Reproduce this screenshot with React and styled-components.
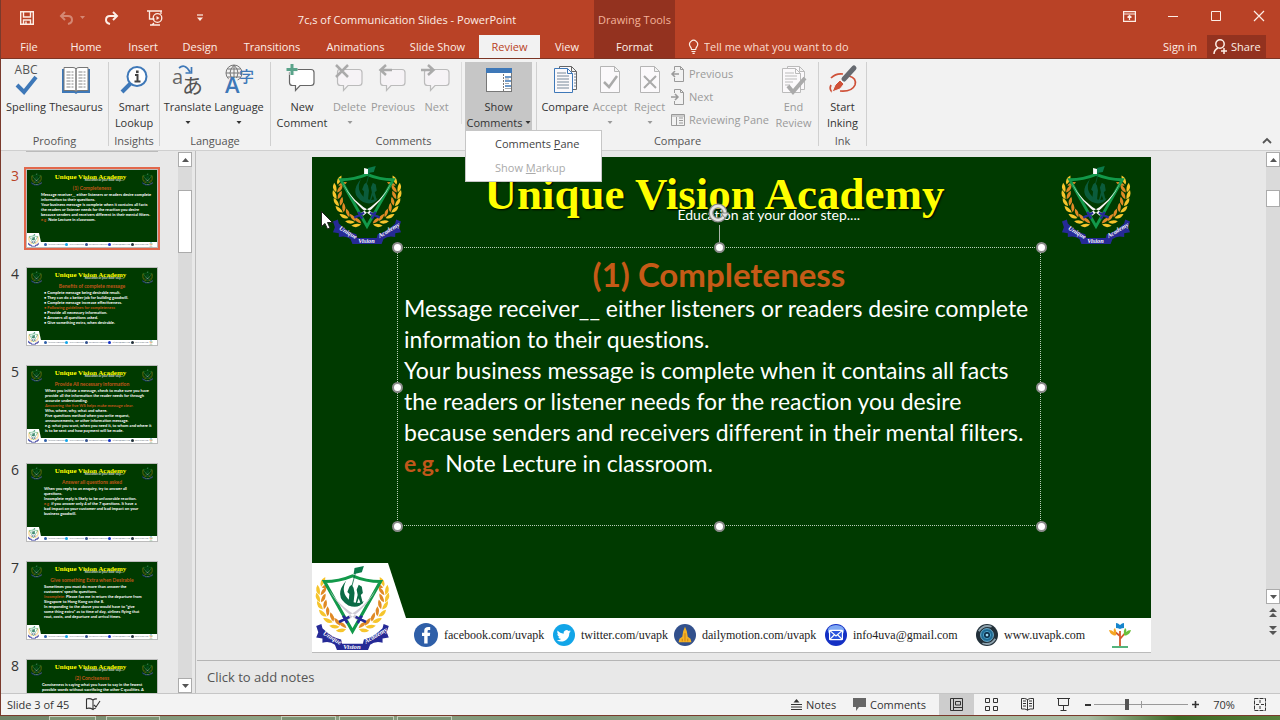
import React from "react";
import styled, { createGlobalStyle, css } from "styled-components";

const ui = `"Open Sans", "Noto Sans", sans-serif`;
const slideFont = `Lato, "Open Sans", sans-serif`;
const serif = `"Liberation Serif", serif`;
const red = "#b94226";
const darkRed = "#93321f";
const green = "#003a00";

const Global = createGlobalStyle`
  * { box-sizing: border-box; }
  body { margin: 0; font-family: ${ui}; font-size: 11px; color: #333; background: #e8e8e8; overflow: hidden; }
  button, input, textarea { font: inherit; color: inherit; margin: 0; padding: 0; border: 0; background: none; }
  svg { display: block; flex: none; overflow: visible; }
`;

/* ---------- window frame ---------- */
const Window = styled.div`
  height: 100vh;
  min-height: 600px;
  display: flex;
  flex-direction: column;
  background: #e8e8e8;
`;
const Frame = styled.div`
  flex: 1;
  min-height: 0;
  display: flex;
  flex-direction: column;
  border-left: 1px solid #7a3a2c;
`;
const Header = styled.header`
  background: ${red};
  color: #fdeee6;
  border-bottom: 1px solid #7d3524;
  height: 59px;
`;
const TitleBar = styled.div`
  height: 35px;
  display: flex;
`;
const QuickAccess = styled.div`
  width: 219px;
  display: flex;
  align-items: center;
`;
const QuickButton = styled.button`
  width: ${(p) => p.$w}px;
  height: 34px;
  display: flex;
  align-items: center;
  justify-content: center;
  opacity: ${(p) => (p.disabled ? 0.4 : 1)};
`;
const WindowTitle = styled.div`
  width: 374px;
  line-height: 39px;
  text-align: center;
`;
const ToolsTitle = styled.div`
  width: 81px;
  line-height: 39px;
  text-align: center;
  background: ${darkRed};
  color: #f3b29a;
`;
const WindowButtons = styled.div`
  margin-left: auto;
  display: flex;
`;
const WindowButton = styled.button`
  width: 43px;
  height: 32px;
  display: flex;
  align-items: center;
  justify-content: center;
`;
const Tabs = styled.nav`
  display: flex;
  height: 23px;
`;
const Tab = styled.button`
  width: ${(p) => p.$w}px;
  line-height: 23px;
  text-align: center;
  white-space: nowrap;
  ${(p) => p.$kind === "active" && css`background: #f2f2f2; color: ${red};`}
  ${(p) => p.$kind === "tool" && css`background: ${darkRed};`}
`;
const TellMe = styled.label`
  display: flex;
  align-items: center;
  gap: 5px;
  padding-left: 13px;
  flex: 1;
  input { flex: 1; min-width: 0; outline: 0; }
  input::placeholder { color: #f9dccf; opacity: 1; }
`;
const ShareButton = styled.button`
  display: flex;
  align-items: center;
  gap: 4px;
  width: 59px;
  margin: 0 14px 0 10px;
  padding-left: 6px;
  background: ${darkRed};
`;

/* ---------- ribbon ---------- */
const Ribbon = styled.div`
  height: 92px;
  padding: 3px 0 4px;
  display: flex;
  background: #f2f2f2;
  border-bottom: 1px solid #cfcfcf;
`;
const Group = styled.section`
  display: flex;
  flex-direction: column;
  border-right: 1px solid #d0d0d0;
`;
const GroupTools = styled.div`
  flex: 1;
  display: flex;
  padding: 0 ${(p) => p.$r || 0}px 0 ${(p) => p.$l || 0}px;
`;
const GroupLabel = styled.div`
  line-height: 10px;
  height: 10px;
  text-align: center;
  color: #555;
`;
const BigButton = styled.button`
  width: ${(p) => p.$w}px;
  height: 68px;
  padding-top: 2px;
  display: flex;
  flex-direction: column;
  align-items: center;
  line-height: 16px;
  white-space: nowrap;
  color: ${(p) => (p.disabled ? "#9a9a9a" : "#333")};
  background: ${(p) => (p.$open ? "#c6c6c6" : "none")};
  svg.icon { margin-bottom: 3px; }
`;
const SecondLine = styled.span`
  height: 16px;
  display: flex;
  align-items: center;
  gap: 2px;
`;
const ShortRule = styled.div`
  width: 1px;
  height: 62px;
  margin: 0 3px;
  background: #dcdcdc;
`;
const SmallTools = styled.div`
  width: 103px;
  padding-left: 3px;
`;
const SmallButton = styled.button`
  display: flex;
  align-items: center;
  gap: 4px;
  height: 23px;
  color: #9a9a9a;
  white-space: nowrap;
`;
const CollapseButton = styled.button`
  margin: auto 7px 0 auto;
  padding: 2px;
`;
const MenuAnchor = styled.div`
  position: relative;
`;
const Menu = styled.div`
  position: absolute;
  z-index: 5;
  top: 68px;
  left: 0;
  width: 137px;
  padding: 1px 0;
  background: #fff;
  border: 1px solid #c6c6c6;
`;
const MenuItem = styled.button`
  display: block;
  width: 100%;
  padding-left: 29px;
  line-height: 24px;
  text-align: left;
  color: ${(p) => (p.disabled ? "#aaa" : "#444")};
`;

/* ---------- workspace ---------- */
const Workspace = styled.main`
  flex: 1;
  min-height: 0;
  display: flex;
`;
const SlideList = styled.aside`
  width: 195px;
  display: flex;
  justify-content: space-between;
  padding-right: 3px;
  border-right: 1px solid #bdbdbd;
`;
const ThumbColumn = styled.div`
  overflow: hidden;
  display: flex;
  flex-direction: column;
  gap: 19px;
  padding-left: 2px;
`;
const PreviousEdge = styled.div`
  flex: none;
  width: 132px;
  height: 1px;
  margin: 0 0 -2px 23px;
  background: #bbb;
`;
const ThumbRow = styled.div`
  display: flex;
  flex: none;
  height: 79px;
  color: ${(p) => (p.$selected ? red : "#333")};
`;
const ThumbNumber = styled.span`
  width: 23px;
  padding-left: 8px;
  font-size: 14px;
  line-height: 14px;
`;
const Thumb = styled.div`
  position: relative;
  width: 132px;
  margin-right: 4px;
  display: flex;
  flex-direction: column;
  background: ${green};
  border: 1px solid #bbb;
  box-shadow: ${(p) => (p.$selected ? "0 0 0 2px #e2684c" : "none")};
  color: #fff;
`;
const ThumbTop = styled.div`
  display: flex;
  justify-content: space-between;
  align-items: flex-start;
  height: 15px;
  padding: 3px 4px 0;
  svg { opacity: 0.65; }
`;
const ThumbTitle = styled.div`
  padding-right: 3px;
  font: 700 7px/8px ${serif};
  color: #ff0;
`;
const ThumbSubtitle = styled.div`
  margin: -3px 0 0 30px;
  font: 3px/4px ${slideFont};
  color: #fff;
`;
const ThumbBody = styled.div`
  flex: 1;
  min-height: 0;
  padding-left: ${(p) => p.$l}px;
  font: 700 4px/5px ${slideFont};
  white-space: nowrap;
`;
const ThumbHeading = styled.div`
  margin: 0 0 1px -${(p) => p.$l}px;
  text-align: center;
  font-size: 5px;
  line-height: 6px;
  color: #c2571a;
`;
const Orange = styled.span`
  color: #c2571a;
`;
const ThumbFoot = styled.div`
  height: 5px;
  padding: 0 4px 0 17px;
  display: flex;
  align-items: center;
  justify-content: space-between;
  background: #fff;
  color: #456;
  font: 2px/5px ${serif};
`;
const ThumbContact = styled.span`
  display: flex;
  align-items: center;
  gap: 1px;
  i { width: 3px; height: 3px; border-radius: 50%; background: ${(p) => p.$c}; }
`;
const ThumbBadge = styled.div`
  position: absolute;
  left: 0;
  bottom: 0;
  padding: 1px 3px 0 1px;
  background: #fff;
  clip-path: polygon(0 0, 80% 0, 100% 100%, 0 100%);
`;

const Scroll = styled.div`
  width: ${(p) => p.$w}px;
  display: flex;
  flex-direction: column;
  padding: 1px 0 ${(p) => p.$b || 0}px;
`;
const ScrollButton = styled.button`
  height: ${(p) => (p.$flat ? 17 : 15)}px;
  display: flex;
  align-items: center;
  justify-content: center;
  background: ${(p) => (p.$flat ? "none" : "#fff")};
  border: ${(p) => (p.$flat ? 0 : 1)}px solid #ababab;
`;
const ScrollTrack = styled.div`
  flex: 1;
  padding-top: 23px;
  background: #dadada;
`;
const ScrollThumb = styled.div`
  height: ${(p) => p.$h}px;
  background: #fff;
  border: 1px solid #ababab;
`;

const Editor = styled.div`
  flex: 1;
  min-width: 0;
  display: flex;
  flex-direction: column;
`;
const Stage = styled.div`
  flex: 1;
  min-height: 0;
  display: flex;
`;
const StagePad = styled.div`
  flex: 1;
  min-width: 0;
  padding: 6px 115px 0 116px;
`;
const Notes = styled.textarea`
  display: block;
  height: 33px;
  margin-left: 1px;
  padding: 6px 10px;
  border-top: 1px solid #b5b5b5;
  resize: none;
  outline: 0;
  font-size: 13px;
  line-height: 20px;
  &::placeholder { color: #555; opacity: 1; }
`;

/* ---------- slide ---------- */
const Slide = styled.article`
  position: relative;
  aspect-ratio: 839 / 496;
  display: flex;
  flex-direction: column;
  background: ${green};
  color: #fff;
  font-family: ${slideFont};
  font-variant-ligatures: none;
  border-bottom: 1px solid #bbb;
`;
const SlideTop = styled.div`
  flex: 1;
  display: flex;
  justify-content: space-between;
  align-items: flex-start;
  padding: 8px 20px 0;
`;
const SlideHeading = styled.div`
  padding-right: 34px;
`;
const SlideTitle = styled.h1`
  margin: 0;
  padding-top: 4px;
  font: 700 45px/50px ${serif};
  color: #ff0;
  text-shadow: 1px 1px 2px #000;
`;
const SlideSubtitle = styled.p`
  margin: -12px 0 0;
  padding-left: 193px;
  font-size: 14px;
  line-height: 16px;
`;
const TextBox = styled.div`
  position: absolute;
  left: 85px;
  right: 110px;
  top: 90px;
  height: 279px;
  padding: 8px 7px;
  outline: 1px dotted #b9cdb9;
  outline-offset: -1px;
  font-size: 23px;
  line-height: 31px;
  white-space: nowrap;
`;
const BoxHeading = styled.h2`
  margin: 0;
  text-align: center;
  font-size: 33px;
  line-height: 38px;
  color: #c55a17;
`;
const Handle = styled.i`
  position: absolute;
  left: ${(p) => p.$x}%;
  top: ${(p) => p.$y}%;
  width: 11px;
  height: 11px;
  margin: -5px;
  border-radius: 50%;
  background: #fff;
  border: 2px solid #8b8b8b;
`;
const RotateHandle = styled.div`
  position: absolute;
  left: 50%;
  bottom: 100%;
  margin-left: -11px;
  width: 22px;
  display: flex;
  flex-direction: column;
  align-items: center;
`;
const Stem = styled.i`
  width: 1px;
  height: 22px;
  background: #a9b5a9;
`;
const SlideFoot = styled.footer`
  height: 34px;
  padding-left: 102px;
  display: flex;
  align-items: center;
  background: #fff;
  color: #222;
  font: 12px/16px ${serif};
`;
const Contact = styled.span`
  width: ${(p) => p.$w}px;
  display: flex;
  align-items: center;
  gap: 6px;
`;
const BadgeCorner = styled.div`
  position: absolute;
  left: 0;
  bottom: 0;
  width: 94px;
  height: 89px;
  padding: 3px 0 0 3px;
  background: #fff;
  clip-path: polygon(0 0, 76px 0, 94px 55px, 94px 100%, 0 100%);
`;
const Pointer = styled.div`
  position: absolute;
  left: 9px;
  top: 54px;
`;

/* ---------- status bar ---------- */
const Status = styled.footer`
  height: 23px;
  display: flex;
  align-items: center;
  padding-right: 6px;
  background: #f3f3f3;
  border-top: 1px solid #c6c6c6;
  border-bottom: 1px solid #7a3a2c;
`;
const StatusButton = styled.button`
  height: 21px;
  width: ${(p) => p.$w}px;
  display: flex;
  align-items: center;
  justify-content: ${(p) => (p.$left ? "flex-start" : "center")};
  gap: 4px;
  background: ${(p) => (p.$on ? "#cdcdcd" : "none")};
`;
const SlideCount = styled.span`
  width: 84px;
  padding-left: 6px;
`;
const Spacer = styled.span`
  flex: 1;
`;
const ZoomRange = styled.input`
  appearance: none;
  width: 94px;
  height: 16px;
  background:
    linear-gradient(#999, #999) 50% 50% / 1px 7px no-repeat,
    linear-gradient(#999, #999) 50% 50% / 100% 1px no-repeat;
  &::-webkit-slider-thumb { appearance: none; width: 4px; height: 11px; background: #555; }
`;
const Desktop = styled.div`
  height: 4px;
  display: flex;
  background: linear-gradient(90deg, #6f8468, #8da284 20%, #7f9677 45%, #9db398 60%, #a9bba2 85%, #3d6a24 92%, #56803a);
`;
const DesktopTile = styled.i`
  width: ${(p) => p.$w}px;
  margin-left: ${(p) => p.$m}px;
  border: 1px solid #c4d0bd;
  border-bottom: 0;
  background: #7d9475;
`;

/* ---------- drawings ---------- */
const Svg = ({ w = 16, h, children, vb, className }) => (
  <svg className={className} width={w} height={h || w} viewBox={vb || `0 0 ${w} ${h || w}`} fill="none" stroke="currentColor" aria-hidden="true">
    {children}
  </svg>
);
const Caret = () => <Svg w={6} h={4}><path d="M.5 0h5L3 3z" fill="currentColor" stroke="none" /></Svg>;

const Bubble = ({ x = 0, c = "#666", fill = "#fff" }) => (
  <path d={`M${x + 3} 5.500h19q3 0 3 3v10q0 3-3 3H${x + 11}l-4.500 5v-5h-3q-3 0-3-3v-10q0-3 2.500-3z`} stroke={c} fill={fill} strokeWidth="1.200" />
);
const Page = ({ x = 0, y = 0, c, w = 19, h = 26 }) => (
  <path d={`M${x + 0.5} ${y + 0.5}h${w - 6}l5 5v${h - 6}h-${w - 1}zM${x + w - 5.500} ${y + 0.5}v5h5`} stroke={c} fill="#fbf9fb" />
);

const icons = {
  spelling: (
    <>
      <text x="16" y="10" textAnchor="middle" fontFamily="Open Sans" fontSize="12" fill="#555" stroke="none">ABC</text>
      <path d="M7 21l7 7L26 13" stroke="#3e78b8" strokeWidth="4" />
    </>
  ),
  thesaurus: (
    <>
      <path d="M2 5h28v24H17.500L16 30l-1.500-1H2z" fill="#3e78b8" stroke="none" />
      <path d="M4 3.500h9q3 0 3 2v22q0-1-3-1H4zM28 3.500h-9q-3 0-3 2v22q0-1 3-1h9z" fill="#fff" stroke="#777" />
      <path d="M6.500 8h7M6.500 11h7M6.500 14h7M6.500 17h7M6.500 20h7M6.500 23h7M18.500 8h7M18.500 11h7M18.500 14h7M18.500 17h7M18.500 20h7M18.500 23h7" stroke="#888" strokeDasharray="4 1" />
    </>
  ),
  lookup: (
    <>
      <path d="M13 19L4 28" stroke="#3e78b8" strokeWidth="4" />
      <circle cx="19" cy="12.500" r="9.500" stroke="#3e78b8" strokeWidth="2" fill="#fff" />
      <path d="M17 11h2.500v6M16.500 17.500h6" stroke="#444" strokeWidth="2" />
      <rect x="18" y="6.500" width="2.600" height="2.600" fill="#444" stroke="none" />
    </>
  ),
  translate: (
    <>
      <text x="0" y="20" fontFamily="Open Sans" fontSize="20" fill="#666" stroke="none">a</text>
      <text x="10" y="29" fontFamily="Noto Sans CJK JP" fontSize="21" fill="#555" stroke="none">あ</text>
      <path d="M7 4q6-5 11 4M19.500 3v6h-6" stroke="#3e78b8" strokeWidth="1.700" />
    </>
  ),
  language: (
    <>
      <circle cx="11" cy="9" r="8" stroke="#777" />
      <path d="M3 9h16M4.500 5h13M4.500 13h13M11 1v16M11 1q-8 8 0 16M11 1q8 8 0 16" stroke="#777" />
      <path d="M6 14h8l4 15H2z" fill="#f2f2f2" stroke="none" />
      <text x="2" y="29" fontFamily="Open Sans" fontWeight="600" fontSize="22" fill="#3e78b8" stroke="none">A</text>
      <text x="16" y="18" fontFamily="Noto Sans CJK JP" fontSize="15" fontWeight="500" fill="#3e78b8" stroke="none">字</text>
    </>
  ),
  newComment: (
    <>
      <Bubble x={3} />
      <path d="M6 0v11M.5 5.500h11" stroke="#f2f2f2" strokeWidth="5" />
      <path d="M6 0v11M.5 5.500h11" stroke="#5aa38a" strokeWidth="3" />
    </>
  ),
  deleteComment: (
    <>
      <Bubble x={3} c="#bbb" fill="#f6f3f6" />
      <path d="M2 1l12 12M14 1L2 13" stroke="#aaa" strokeWidth="2.500" />
    </>
  ),
  prevComment: (
    <>
      <Bubble x={3} c="#bbb" fill="#f6f3f6" />
      <path d="M3 6h12M9 1L3.500 6 9 11" stroke="#aaa" strokeWidth="2.500" />
    </>
  ),
  nextComment: (
    <>
      <Bubble x={3} c="#bbb" fill="#f6f3f6" />
      <path d="M0 6h12M7 1l5.500 5L7 11" stroke="#aaa" strokeWidth="2.500" />
    </>
  ),
  showComments: (
    <>
      <rect x="3.500" y="4.500" width="25" height="23" fill="#fff" stroke="#777" />
      <path d="M3 4h26v5H3z" fill="#3e78b8" stroke="none" />
      <path d="M20.500 10v17" stroke="#777" strokeDasharray="2 1" />
      <path d="M22 13h6M22 17h6M22 22h6" stroke="#3e78b8" strokeWidth="1.500" />
      <path d="M22 15h4M22 19.500h4M22 24.500h6" stroke="#aaa" />
    </>
  ),
  compare: (
    <>
      <Page x={10} y={2} c="#666" w={18} h={24} />
      <Page x={5} y={4} c="#3e78b8" w={19} h={25} />
      <path d="M8 9h9M8 12h12M8 15h12M8 18h12M8 21h12M8 24h12" stroke="#789" />
      <path d="M25 10h2M25 13h2M25 16h2M25 19h2M25 22h2" stroke="#789" />
    </>
  ),
  accept: (<><Page x={6} y={2} c="#b5b5b5" w={20} h={27} /><path d="M10 18l5 5 8-11" stroke="#aaa" strokeWidth="2.500" /></>),
  reject: (<><Page x={6} y={2} c="#b5b5b5" w={20} h={27} /><path d="M10 12l12 12M22 12L10 24" stroke="#aaa" strokeWidth="2" /></>),
  endReview: (
    <>
      <Page x={9} y={2} c="#bbb" w={18} h={24} />
      <Page x={4} y={4} c="#bbb" w={19} h={25} />
      <path d="M7 9h9M7 12h12M7 15h12M7 18h8M7 21h5" stroke="#bbb" />
      <path d="M10 22l5 6 12-14" stroke="#aaa" strokeWidth="4" />
    </>
  ),
  ink: (
    <>
      <path d="M4 14q5-5 12-4M22 12q8 2 6 9-3 7-15 6M4 21q-2 4 1 7" stroke="#cf5138" strokeWidth="1.700" />
      <path d="M17 15L27 4" stroke="#666a70" strokeWidth="5" strokeLinecap="round" />
      <path d="M5 28l3-7 5-5 4 4-4 5z" fill="#cf5138" stroke="#f2f2f2" strokeWidth="1" />
    </>
  ),
};
const RibbonIcon = ({ name }) => <Svg className="icon" w={32}>{icons[name]}</Svg>;

const Leaves = ({ flip }) => {
  const pts = [[7, 18, -50], [4, 25, -15], [4, 32, -5], [6, 39, 8], [9, 46, 22], [14, 52, 40], [20, 57, 58], [26, 60, 72]];
  return (
    <g transform={flip ? "translate(70 0) scale(-1 1)" : undefined} stroke="none">
      {pts.map(([x, y, a], i) => (
        <g key={i} transform={`translate(${x} ${y}) rotate(${-a})`}>
          <path d="M0 3Q-6 1-4.500-6 0-3 0 3z" fill="#f6c52c" />
          <path d="M1 3Q6 0 4.500-6 0-3 1 3z" fill="#e08a25" />
        </g>
      ))}
    </g>
  );
};
const Logo = ({ w, light }) => {
  const figure = light ? "#0b6b46" : "#0b5c3c";
  return (
    <svg width={w} height={Math.round((w * 82) / 72)} viewBox="-1 0 72 82" fill="none" aria-hidden="true">
      <Leaves />
      <Leaves flip />
      <path d="M8 15Q22 15 35 9.500 48 15 62 15L35 63z" stroke="#12994a" strokeWidth="3" fill={light ? "#fff" : "none"} />
      <path d="M29 14q-13 15 2 24 10 4 15-4-8 4-14-1-9-8-3-19z" fill={figure} />
      <path d="M31 36l1-9-2-2 2-5 2-2 2 3 1 5-1 10zM38 36l2-8-1-5 2-5 3 2 1 6-2 2 2 8-2 1-2-6-2 6z" fill={figure} />
      <path d="M34 21l4-15" stroke={figure} strokeWidth=".8" />
      <path d={light ? "M37 2l9-2-2 6-8 2z" : "M36 3l8-2-2 6-6 1z"} fill="#0b7a4a" />
      {!light && <path d="M32 3l4 1v5h-4z" fill="#fff" />}
      <path d="M10 18Q20 38 41 49l-2 3Q19 38 10 18zM60 18Q50 38 29 49l2 3Q51 38 60 18z" fill={light ? "#cfcbd4" : "#f4f4f4"} />
      <path d="M22 54l10-5M26 48l4 7M48 54l-10-5M44 48l-4 7" stroke="#262a96" strokeWidth="2.500" />
      <path d="M0 58l5-2 1 4q9 9 18 11l1 4h20l1-4q9-2 18-11l1-4 5 2-2 6 2 5-6 1v4q-7-2-12 2l-2 5H20l-2-5q-5-4-12-2v-4l-6-1 2-5z" fill="#262a96" />
      <g fill="#fff" fontFamily="Liberation Serif" fontWeight="700" fontStyle="italic" fontSize="6.500">
        <text transform="translate(6 66) rotate(31)">Unique</text>
        <text x="26" y="80">Vision</text>
        <text transform="translate(48 75) rotate(-31)">Academy</text>
      </g>
    </svg>
  );
};

const Facebook = () => (
  <svg width="24" height="24" viewBox="0 0 24 24"><circle cx="12" cy="12" r="12" fill="#2f5fa8" /><path d="M10.200 20.500V13H8V9.800h2.200V8c0-3 1.500-4 4-4h2v3h-1.300c-1 0-1.300.4-1.300 1.300v1.500h2.600l-.4 3.200h-2.200v7.500z" fill="#fff" /></svg>
);
const Twitter = () => (
  <svg width="22" height="22" viewBox="0 0 24 24"><circle cx="12" cy="12" r="12" fill="#12a5e8" /><path d="M19.500 8c-.6.300-1.200.4-1.800.5.700-.4 1.100-1 1.300-1.700-.6.400-1.300.6-2 .8a3.200 3.200 0 0 0-5.400 2.900c-2.600-.1-5-1.400-6.500-3.400-.8 1.500-.4 3.300 1 4.300-.5 0-1-.2-1.400-.4 0 1.500 1.100 2.800 2.500 3.100-.4.100-1 .1-1.400 0 .4 1.300 1.600 2.200 3 2.200A6.400 6.400 0 0 1 4 17.700c6 3.800 13.800 0 13.800-8 .7-.5 1.300-1 1.700-1.700z" fill="#fff" /></svg>
);
const Daily = () => (
  <svg width="22" height="22" viewBox="0 0 24 24"><circle cx="12" cy="12" r="12" fill="#32508c" /><path d="M12 3l2 5 1 6 3 2 1 4H5l1-4 3-2 1-6z" fill="#f5b324" /><path d="M12 10v9M9 16v3M15 16v3" stroke="#c87a15" /></svg>
);
const Mail = () => (
  <svg width="22" height="22" viewBox="0 0 24 24"><circle cx="12" cy="12" r="12" fill="#1430c4" /><ellipse cx="12" cy="7" rx="9" ry="6" fill="#7fa8f4" /><rect x="5" y="7" width="14" height="10" rx="1" fill="#2a54dc" stroke="#fff" strokeWidth="1.300" /><path d="M5 7l7 6 7-6M5 17l5-5M19 17l-5-5" stroke="#fff" strokeWidth="1.300" fill="none" /></svg>
);
const Web = () => (
  <svg width="22" height="24" viewBox="0 0 24 24"><circle cx="12" cy="12" r="12" fill="#22303a" /><path d="M3 8q5-8 14-5M21 16q-5 8-14 5" stroke="#8fa2ad" strokeWidth="2" fill="none" /><circle cx="12" cy="12" r="7" fill="#1d6a94" stroke="#76b6d4" /><circle cx="12" cy="12" r="4" fill="#0d2f4a" stroke="#4fa3cc" /><circle cx="12" cy="12" r="1.500" fill="#9fdcf5" /></svg>
);
const Tree = ({ w = 22, h = 26 }) => (
  <svg width={w} height={h} viewBox="0 0 22 26"><path d="M7 1q2 0 4 2 2-2 4-2v5q-2 0-4 1-2-1-4-1z" fill="#1685cc" /><path d="M11 24V14L6 10M11 17l6-7M11 15V9" stroke="#d4582c" strokeWidth="1.800" fill="none" /><path d="M0 8q3 0 5 2-1-3 1-4 2 3 1 7-1 1-3 0-3-1-4-5z" fill="#f5a623" /><path d="M22 8q-3 0-5 2 1-3-1-4-2 3-1 7 1 1 3 0 3-1 4-5z" fill="#6bbf3b" /><path d="M3 25h16" stroke="#1b9a50" strokeWidth="1.500" /></svg>
);

const Tri = ({ up }) => <Svg w={7} h={4}><path d={up ? "M0 4h7L3.500 0z" : "M0 0h7L3.500 4z"} fill="#555" stroke="none" /></Svg>;
const Chevrons = ({ up }) => (
  <Svg w={8} h={10}>
    <path d={up ? "M4 0l4 4H0zM4 5l4 4H0z" : "M4 5L0 1h8zM4 10L0 6h8z"} fill="#555" stroke="none" />
  </Svg>
);

/* ---------- data ---------- */
const tabs = [["File", 56], ["Home", 58], ["Insert", 56], ["Design", 58], ["Transitions", 86], ["Animations", 81], ["Slide Show", 83], ["Review", 61, "active"], ["View", 54], ["Format", 81, "tool"]];

const thumbs = [
  { n: 3, l: 14, h: "(1) Completeness", lines: ["Message receiver__ either listeners or readers desire complete", "information to their questions.", "Your business message is complete when it contains all facts", "the readers or listener needs for the reaction you desire", "because senders and receivers different in their mental filters.", ["e.g.", " Note Lecture in classroom."]] },
  { n: 4, l: 17, h: "Benefits of complete message", lines: ["• Complete message being desirable result.", "• They can do a better job for building goodwill.", "• Complete message increase effectiveness.", ["• Following guidelines for completeness", ""], "• Provide all necessary information.", "• Answers all questions asked.", "• Give something extra, when desirable."] },
  { n: 5, l: 18, h: "Provide All necessary information", lines: ["When you initiate a message, check to make sure you have", "provide all the information the reader needs for through", "accurate understanding.", ["Answering the five WS helps make message clear.", ""], "Who, where, why, what and where.", "Five questions method when you write request,", "announcements, or other information message.", "e.g. what you want, when you need it, to whom and where it", "is to be sent and how payment will be made."] },
  { n: 6, l: 17, h: "Answer all questions asked", lines: ["When you reply to an enquiry, try to answer all", "questions.", "Incomplete reply is likely to be unfavorable reaction.", ["e.g.", " if you answer only 4 of the 7 questions. It have a"], "bad impact on your customer and bad impact on your", "business goodwill."] },
  { n: 7, l: 17, h: "Give something Extra when Desirable", lines: ["Sometimes you must do more than answer the", "customers’ specific questions.", ["Incomplete:", " Please fax me in return the departure from"], "Singapore to Hong Kong on the 8.", "In responding to the above you would have to “give", "some thing extra” as to time of day, airlines flying that", "rout, costs, and departure and arrival times."] },
  { n: 8, l: 15, h: "(2) Conciseness", lines: ["Conciseness is saying what you have to say in the fewest", "possible words without sacrificing the other C qualities. A", "concise message is complete without being wordy.", "Conciseness is necessary to effective business"] },
];
const dots = [["facebook.com/uvapk", "#2f5fa8"], ["twitter.com/uvapk", "#12a5e8"], ["dailymotion.com/uvapk", "#32508c"], ["info4uva@gmail.com", "#1430c4"], ["www.uvapk.com", "#22303a"]];

function SlideThumb({ n, l, h, lines }) {
  const selected = n === 3;
  return (
    <ThumbRow $selected={selected}>
      <ThumbNumber>{n}</ThumbNumber>
      <Thumb $selected={selected}>
        <ThumbTop>
          <Logo w={11} />
          <ThumbTitle>
            Unique Vision Academy
            <ThumbSubtitle>Education at your door step....</ThumbSubtitle>
          </ThumbTitle>
          <Logo w={11} />
        </ThumbTop>
        <ThumbBody $l={l}>
          <ThumbHeading $l={l}>{h}</ThumbHeading>
          {lines.map((t, i) => <div key={i}>{Array.isArray(t) ? <><Orange>{t[0]}</Orange>{t[1]}</> : t}</div>)}
        </ThumbBody>
        <ThumbFoot>
          {dots.map(([t, c]) => <ThumbContact key={t} $c={c}><i />{t}</ThumbContact>)}
          <Tree w={4} h={5} />
        </ThumbFoot>
        <ThumbBadge><Logo w={11} light /></ThumbBadge>
      </Thumb>
    </ThumbRow>
  );
}

function Big({ w, icon, a, b, caret, ...rest }) {
  return (
    <BigButton $w={w} {...rest}>
      <RibbonIcon name={icon} />
      <span>{a}</span>
      <SecondLine>{b}{caret && <Caret />}</SecondLine>
    </BigButton>
  );
}

export default function App() {
  return (
    <Window>
      <Global />
      <Frame>
        <Header>
          <TitleBar>
            <QuickAccess>
              <QuickButton $w={52} aria-label="Save"><Svg w={14} h={14}><path d="M.7.7h12.600v12.600H.7zM3.500 1v5h7V1M3.500 13V9h7v4M6 10.500v2" strokeWidth="1.400" /></Svg></QuickButton>
              <QuickButton $w={40} disabled aria-label="Undo">
                <Svg w={26} h={14}><path d="M5 1L1 5l4 4M1 5h7q4 0 4 4 0 3-4 4" strokeWidth="2" /><path d="M20 5h5l-2.500 3z" fill="currentColor" stroke="none" /></Svg>
              </QuickButton>
              <QuickButton $w={36} aria-label="Redo"><Svg w={14} h={14}><path d="M9 1l4 4-4 4M13 5H6Q2 5 2 9q0 3 4 4" strokeWidth="2" /></Svg></QuickButton>
              <QuickButton $w={51} aria-label="Start from beginning"><Svg w={16} h={16}><path d="M0 1h15M2.500 1v8h5M14 1v3M3 15h10M7 13l-2 2" strokeWidth="1.300" /><circle cx="10.500" cy="8" r="4.300" strokeWidth="1.300" /><path d="M9.500 6v4l3-2z" fill="currentColor" stroke="none" /></Svg></QuickButton>
              <QuickButton $w={40} aria-label="Customize toolbar"><Svg w={6} h={8}><path d="M0 1h6" strokeWidth="1.200" /><path d="M0 3.500h6L3 7z" fill="currentColor" stroke="none" /></Svg></QuickButton>
            </QuickAccess>
            <WindowTitle>7c,s of Communication Slides - PowerPoint</WindowTitle>
            <ToolsTitle>Drawing Tools</ToolsTitle>
            <WindowButtons>
              <WindowButton aria-label="Ribbon options"><Svg w={13} h={11}><path d="M.6.6h11.800v9.800H.6zM.6 3h11.800M6.500 9V5M4.500 6.500l2-2 2 2" strokeWidth="1.200" /></Svg></WindowButton>
              <WindowButton aria-label="Minimize"><Svg w={10} h={10}><path d="M0 5.500h10" /></Svg></WindowButton>
              <WindowButton aria-label="Maximize"><Svg w={10} h={10}><path d="M.5.5h9v9h-9z" /></Svg></WindowButton>
              <WindowButton aria-label="Close"><Svg w={10} h={10}><path d="M0 0l10 10M10 0L0 10" strokeWidth="1.200" /></Svg></WindowButton>
            </WindowButtons>
          </TitleBar>
          <Tabs>
            {tabs.map(([t, w, k]) => <Tab key={t} $w={w} $kind={k}>{t}</Tab>)}
            <TellMe>
              <Svg w={11} h={15}><path d="M3.500 10.500q0-1.500-1.300-3A4 4 0 1 1 9 7.500q-1.300 1.500-1.300 3zM3.500 12.500h4M4.500 14.300h2.200" strokeWidth="1.200" /></Svg>
              <input aria-label="Tell me" placeholder="Tell me what you want to do" />
            </TellMe>
            <button>Sign in</button>
            <ShareButton>
              <Svg w={14} h={15}><circle cx="7" cy="5" r="4.200" strokeWidth="1.500" /><path d="M5 9q-4 2-4 6M11 9v6M8 12h6" strokeWidth="1.500" /></Svg>
              Share
            </ShareButton>
          </Tabs>
        </Header>

        <Ribbon>
          <Group>
            <GroupTools $r={7}><Big w={50} icon="spelling" a="Spelling" /><Big w={50} icon="thesaurus" a="Thesaurus" /></GroupTools>
            <GroupLabel>Proofing</GroupLabel>
          </Group>
          <Group>
            <GroupTools><Big w={50} icon="lookup" a="Smart" b="Lookup" /></GroupTools>
            <GroupLabel>Insights</GroupLabel>
          </Group>
          <Group>
            <GroupTools $l={2} $r={5}><Big w={51} icon="translate" a="Translate" caret /><Big w={52} icon="language" a="Language" caret /></GroupTools>
            <GroupLabel>Language</GroupLabel>
          </Group>
          <Group>
            <GroupTools $l={5} $r={4}>
              <Big w={52} icon="newComment" a="New" b="Comment" />
              <Big w={43} icon="deleteComment" a="Delete" caret disabled />
              <Big w={44} icon="prevComment" a="Previous" disabled />
              <Big w={43} icon="nextComment" a="Next" disabled />
              <ShortRule />
              <MenuAnchor>
                <Big w={67} icon="showComments" a="Show" b="Comments" caret $open />
                <Menu>
                  <MenuItem>Comments <u>P</u>ane</MenuItem>
                  <MenuItem disabled>Show <u>M</u>arkup</MenuItem>
                </Menu>
              </MenuAnchor>
            </GroupTools>
            <GroupLabel>Comments</GroupLabel>
          </Group>
          <Group>
            <GroupTools $l={4} $r={2}>
              <Big w={48} icon="compare" a="Compare" />
              <Big w={42} icon="accept" a="Accept" caret disabled />
              <Big w={37} icon="reject" a="Reject" caret disabled />
              <SmallTools>
                <SmallButton disabled><Svg w={14} h={16}><path d="M3.500 4V.5h6l3 3v12h-9V12M9.500.5v3h3" /><path d="M1 8h7M4 5L1 8l3 3" strokeWidth="1.500" /></Svg>Previous</SmallButton>
                <SmallButton disabled><Svg w={14} h={16}><path d="M3.500 4V.5h6l3 3v12h-9V12M9.500.5v3h3" /><path d="M0 8h7M4 5l3 3-3 3" strokeWidth="1.500" /></Svg>Next</SmallButton>
                <SmallButton disabled><Svg w={14} h={14}><path d="M.5 1.500h13v11H.5zM5.500 3v9M8 5h4M8 7.500h4M8 10h4" /><path d="M1 2h12v2H1z" fill="#ccc" stroke="none" /></Svg>Reviewing Pane</SmallButton>
              </SmallTools>
              <Big w={45} icon="endReview" a="End" b="Review" disabled />
            </GroupTools>
            <GroupLabel>Compare</GroupLabel>
          </Group>
          <Group>
            <GroupTools><Big w={47} icon="ink" a="Start" b="Inking" /></GroupTools>
            <GroupLabel>Ink</GroupLabel>
          </Group>
          <CollapseButton aria-label="Collapse ribbon"><Svg w={8} h={6}><path d="M0 5l4-4 4 4" strokeWidth="1.800" stroke="#555" /></Svg></CollapseButton>
        </Ribbon>

        <Workspace>
          <SlideList>
            <ThumbColumn>
              <PreviousEdge />
              {thumbs.map((t) => <SlideThumb key={t.n} {...t} />)}
            </ThumbColumn>
            <Scroll $w={14}>
              <ScrollButton aria-label="Scroll up"><Tri up /></ScrollButton>
              <ScrollTrack><ScrollThumb $h={63} /></ScrollTrack>
              <ScrollButton aria-label="Scroll down"><Tri /></ScrollButton>
            </Scroll>
          </SlideList>

          <Editor>
            <Stage>
              <StagePad>
                <Slide>
                  <SlideTop>
                    <Logo w={70} />
                    <SlideHeading>
                      <SlideTitle>Unique Vision Academy</SlideTitle>
                      <SlideSubtitle>Education at your door step....</SlideSubtitle>
                    </SlideHeading>
                    <Logo w={70} />
                  </SlideTop>
                  <SlideFoot>
                    <Contact $w={139}><Facebook />facebook.com/uvapk</Contact>
                    <Contact $w={121}><Twitter />twitter.com/uvapk</Contact>
                    <Contact $w={151}><Daily />dailymotion.com/uvapk</Contact>
                    <Contact $w={151}><Mail />info4uva@gmail.com</Contact>
                    <Contact $w={133}><Web />www.uvapk.com</Contact>
                    <Tree />
                  </SlideFoot>
                  <BadgeCorner><Logo w={75} light /></BadgeCorner>
                  <TextBox>
                    <BoxHeading>(1) Completeness</BoxHeading>
                    Message receiver__ either listeners or readers desire complete<br />
                    information to their questions.<br />
                    Your business message is complete when it contains all facts<br />
                    the readers or listener needs for the reaction you desire<br />
                    because senders and receivers different in their mental filters.<br />
                    <b><Orange>e.g.</Orange></b> Note Lecture in classroom.
                    <RotateHandle>
                      <Svg w={22} h={22}><circle cx="10" cy="10" r="7" stroke="#8b8b8b" strokeWidth="5" /><circle cx="10" cy="10" r="7" stroke="#e4e4e4" strokeWidth="2.500" /><path d="M13 10h8l-4 5z" fill="#e4e4e4" stroke="#8b8b8b" /></Svg>
                      <Stem />
                    </RotateHandle>
                    {[[0, 0], [50, 0], [100, 0], [0, 50], [100, 50], [0, 100], [50, 100], [100, 100]].map(([x, y]) => <Handle key={`${x}-${y}`} $x={x} $y={y} />)}
                  </TextBox>
                  <Pointer><Svg w={12} h={19}><path d="M.5.5v15l3.500-3 2.500 5.500 2.500-1-2.500-5.500h5z" fill="#fff" stroke="#222" /></Svg></Pointer>
                </Slide>
              </StagePad>
              <Scroll $w={14} $b={22}>
                <ScrollButton aria-label="Scroll up"><Tri up /></ScrollButton>
                <ScrollTrack><ScrollThumb $h={17} /></ScrollTrack>
                <ScrollButton aria-label="Scroll down"><Tri /></ScrollButton>
                <ScrollButton $flat aria-label="Previous slide"><Chevrons up /></ScrollButton>
                <ScrollButton $flat aria-label="Next slide"><Chevrons /></ScrollButton>
              </Scroll>
            </Stage>
            <Notes aria-label="Notes" placeholder="Click to add notes" />
          </Editor>
        </Workspace>

        <Status>
          <SlideCount>Slide 3 of 45</SlideCount>
          <StatusButton $w={16} aria-label="Spell check"><Svg w={14} h={13}><path d="M7 2Q4 0 .5 1v9.500Q4 9.500 7 11.500 8 10.500 10 10M7 2v9M7 2q2-1.500 4-1M8 7l2 2 4-6" strokeWidth="1.100" /></Svg></StatusButton>
          <Spacer />
          <StatusButton $w={62} $left><Svg w={11} h={11}><path d="M0 5.500h11M0 8h11M0 10.500h11" /><path d="M5.500 0l3 3.500h-6z" fill="currentColor" stroke="none" /></Svg>Notes</StatusButton>
          <StatusButton $w={86} $left><Svg w={13} h={13}><path d="M0 0h13v9H6l-3 4V9H0z" fill="#666" stroke="none" /></Svg>Comments</StatusButton>
          <StatusButton $w={35} $on aria-label="Normal view"><Svg w={13} h={13}><path d="M.5.5h12v12H.5zM3.500.5v12M3.500 9.500h9M5.500 3.500h5v3.500h-5z" /></Svg></StatusButton>
          <StatusButton $w={35} aria-label="Slide sorter"><Svg w={13} h={13}><path d="M.5.5h4v4h-4zM8.500.5h4v4h-4zM.5 8.500h4v4h-4zM8.500 8.500h4v4h-4z" /></Svg></StatusButton>
          <StatusButton $w={36} aria-label="Reading view"><Svg w={13} h={13}><path d="M6.500 1.500Q4 0 .5.500v10.500q3.500-.5 6 1 2.500-1.500 6-1V.5q-3.500-.5-6 1zM6.500 1.500v11M2 3h3M2 5.500h3M2 8h3M8 3h3M8 5.500h3M8 8h3" /></Svg></StatusButton>
          <StatusButton $w={36} aria-label="Slide show"><Svg w={13} h={13}><path d="M0 .5h13M1.500 1v6.500h10V1M6.500 8v4M3.500 12.500h6" /></Svg></StatusButton>
          <StatusButton $w={13} aria-label="Zoom out"><Svg w={6} h={6}><path d="M0 3h6" strokeWidth="2" /></Svg></StatusButton>
          <ZoomRange type="range" aria-label="Zoom" min="0" max="100" defaultValue="35" />
          <StatusButton $w={15} aria-label="Zoom in"><Svg w={7} h={7}><path d="M0 3.500h7M3.500 0v7" strokeWidth="1.600" /></Svg></StatusButton>
          <StatusButton $w={42}>70%</StatusButton>
          <StatusButton $w={29} aria-label="Fit slide"><Svg w={12} h={13}><path d="M.5.5h11v12H.5z" strokeDasharray="4 1" /><path d="M6 2v3M6 8v3M2 6.500h3M7 6.500h3" /></Svg></StatusButton>
        </Status>
      </Frame>
      <Desktop><DesktopTile $w={47} $m={49} /><DesktopTile $w={54} $m={10} /><DesktopTile $w={55} $m={121} /><DesktopTile $w={55} $m={3} /><DesktopTile $w={55} $m={3} /></Desktop>
    </Window>
  );
}
